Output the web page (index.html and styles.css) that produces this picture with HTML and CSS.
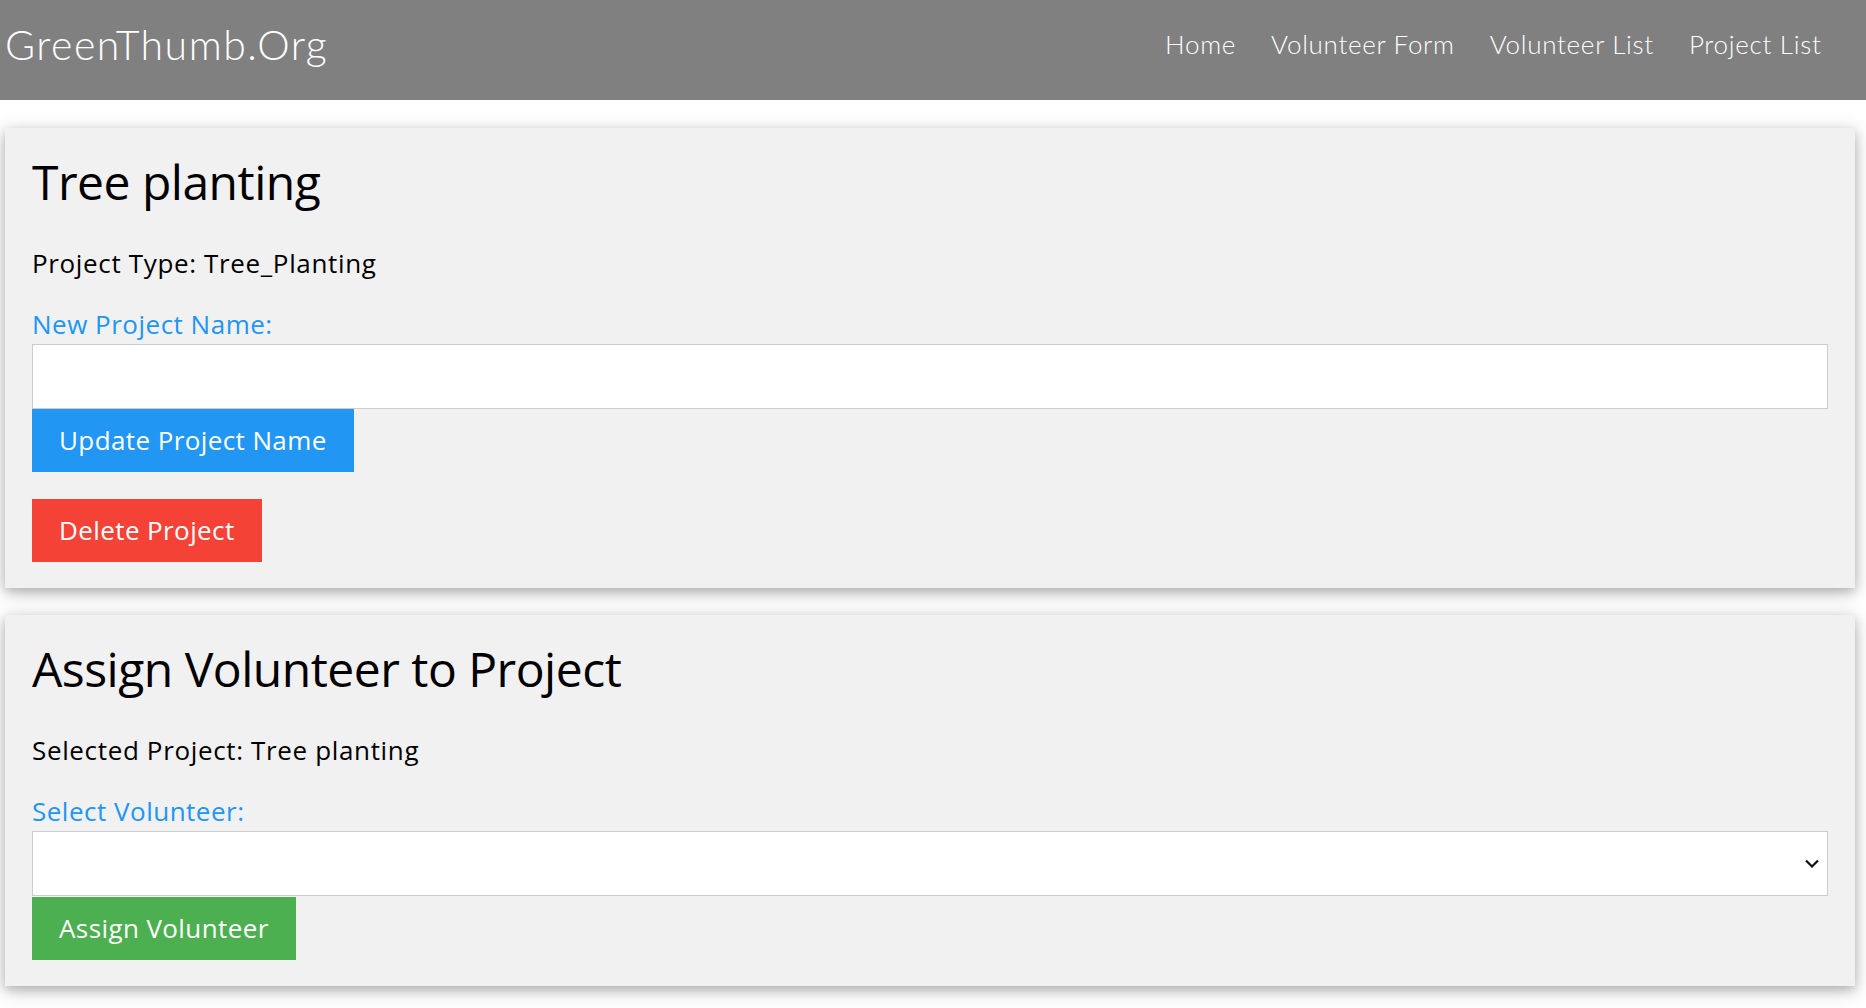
FILE: index.html
```html
<!DOCTYPE html>
<html lang="en">
<head>
<meta charset="utf-8">
<title>GreenThumb.Org</title>
<link rel="stylesheet" href="styles.css">
</head>
<body>
<nav class="topbar">
  <a class="brand" href="#">GreenThumb.Org</a>
  <div class="links">
    <a href="#">Home</a>
    <a href="#">Volunteer Form</a>
    <a href="#">Volunteer List</a>
    <a href="#">Project List</a>
  </div>
</nav>
<main class="page">
  <section class="card">
    <h2 class="title">Tree planting</h2>
    <p class="info">Project Type: Tree_Planting</p>
    <label class="label" for="pname">New Project Name:</label>
    <input class="field" id="pname" type="text">
    <button class="btn btn-blue">Update Project Name</button>
    <button class="btn btn-red btn-gap">Delete Project</button>
  </section>
  <section class="card">
    <h2 class="title">Assign Volunteer to Project</h2>
    <p class="info">Selected Project: Tree planting</p>
    <label class="label" for="vol">Select Volunteer:</label>
    <div class="select-wrap">
      <select class="field select" id="vol"><option></option></select>
      <svg class="chev" width="14" height="9" viewBox="0 0 14 9"><path d="M1 1.5 L7 7.5 L13 1.5" fill="none" stroke="#111" stroke-width="2.2"/></svg>
    </div>
    <button class="btn btn-green">Assign Volunteer</button>
  </section>
</main>
</body>
</html>
```
FILE: styles.css
```css
* { box-sizing: border-box; }
html, body { margin: 0; padding: 0; background: #fff; }
body { font-family: "Open Sans", "Noto Sans", sans-serif; color: #000; }

.topbar {
  height: 100px;
  background: #808080;
  display: flex;
  align-items: center;
  justify-content: space-between;
  padding: 0 27px 0 5px;
  font-family: "Lato", sans-serif;
  font-weight: 300;
}
.topbar a { color: #fff; text-decoration: none; }
.brand { font-size: 41px; letter-spacing: 1.5px; margin-top: -11px; }
.links { display: flex; margin-top: -12px; }
.links a { font-size: 26px; letter-spacing: 0.7px; padding: 0 17.5px; }

.page { padding-top: 28px; padding-bottom: 22px; }

.card {
  margin: 0 11px 27px 5px;
  background: #f1f1f1;
  box-shadow: 0 4px 10px 0 rgba(0,0,0,0.2), 0 4px 20px 0 rgba(0,0,0,0.19);
  padding: 24px 27px 26px 27px;
  display: flex;
  flex-direction: column;
  align-items: flex-start;
}
.card:last-child { margin-bottom: 0; }

.title { margin: 0; font-size: 48px; line-height: 60px; font-weight: 400; letter-spacing: -0.5px; }
.info { margin: 32px 0 0; font-size: 26px; line-height: 39px; letter-spacing: 0.65px; }
.label { margin-top: 22px; display: block; font-size: 26px; line-height: 39px; color: #2196F3; letter-spacing: 0.5px; }

.field {
  width: 100%;
  height: 65px;
  border: 1px solid #ccc;
  background: #fff;
  margin: 0;
  font: inherit;
}
.select-wrap { position: relative; width: 100%; }
.select { appearance: none; -webkit-appearance: none; display: block; height: 65px; border-radius: 0; }
.chev { position: absolute; right: 9px; top: 28px; }

.btn {
  border: none;
  color: #fff;
  font-family: inherit;
  font-size: 26px;
  line-height: 39px;
  letter-spacing: 0.4px;
  padding: 12px 27px;
  margin: 0;
  cursor: pointer;
}
.btn-gap { margin-top: 27px; }
.btn-blue { background: #2196F3; }
.btn-red { background: #f44336; }
.btn-green { background: #4CAF50; margin-top: 1px; }
```
